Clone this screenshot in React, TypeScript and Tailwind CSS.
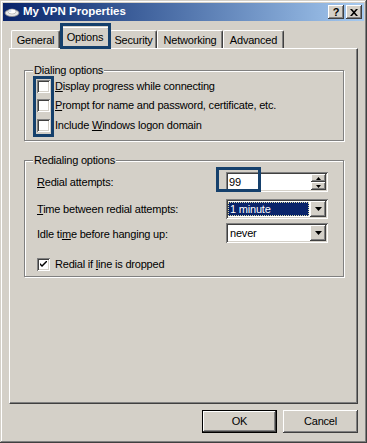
import React from "react";

const raised =
  "shadow-[inset_-1px_-1px_0_#404040,inset_1px_1px_0_#ffffff,inset_-2px_-2px_0_#808080,inset_2px_2px_0_#d4d0c8]";
const sunken =
  "shadow-[inset_1px_1px_0_#808080,inset_-1px_-1px_0_#ffffff,inset_2px_2px_0_#404040,inset_-2px_-2px_0_#d4d0c8]";
const etched =
  "border border-[#808080] shadow-[inset_1px_1px_0_#ffffff,1px_1px_0_#ffffff]";

function Check({ checked }: { checked?: boolean }) {
  return (
    <div className={`w-[13px] h-[13px] bg-white flex items-center justify-center shrink-0 ${sunken}`}>
      {checked && (
        <svg width="7" height="7" viewBox="0 0 7 7">
          <path d="M0 2 L0 4 L2 6 L7 1 L7 -1 L2 4 Z" fill="#000" />
        </svg>
      )}
    </div>
  );
}

function DownArrow() {
  return (
    <svg width="7" height="4" viewBox="0 0 7 4">
      <path d="M0 0 H7 L3.5 4 Z" fill="#000" />
    </svg>
  );
}

function Tab({ label, w, selected }: { label: string; w: string; selected?: boolean }) {
  return (
    <div
      className={`${w} ${
        selected ? "h-[22px] mb-[-1px] z-10 pb-[3px]" : "h-[18px] pt-[1px]"
      } relative bg-[#d4d0c8] border-t border-l border-white border-r border-r-[#404040] rounded-tl-[2px] rounded-tr-[2px] shadow-[inset_-1px_0_0_#808080] flex items-center justify-center`}
    >
      {label}
    </div>
  );
}

export default function App() {
  return (
    <div className="w-[367px] h-[443px] bg-[#d4d0c8] p-[3px] flex flex-col font-['Liberation_Sans',Arial,sans-serif] text-[11px] tracking-[-0.2px] text-black shadow-[inset_-1px_-1px_0_#404040,inset_1px_1px_0_#d4d0c8,inset_-2px_-2px_0_#808080,inset_2px_2px_0_#ffffff]">
      {/* Title bar */}
      <div className="h-[18px] w-[361px] bg-linear-to-r from-[#0a246a] to-[#a6caf0] flex items-center">
        <svg width="16" height="16" viewBox="0 0 16 16" className="ml-[1px]">
          <ellipse cx="8" cy="9" rx="7" ry="3.5" fill="#e8e8e8" stroke="#8a8a8a" strokeWidth="0.8" />
          <ellipse cx="8" cy="7.5" rx="4" ry="2.5" fill="#ffffff" stroke="#a0a0a0" strokeWidth="0.6" />
          <ellipse cx="6" cy="7" rx="1.5" ry="0.8" fill="#c8d8f0" />
        </svg>
        <span className="ml-[3px] text-white font-bold text-[11.5px] tracking-normal leading-none">My VPN Properties</span>
        <div className="ml-auto mr-[2px] flex gap-[2px]">
          <div className={`w-[16px] h-[14px] bg-[#d4d0c8] flex items-center justify-center font-bold text-[11px] leading-none ${raised}`}>
            ?
          </div>
          <div className={`w-[16px] h-[14px] bg-[#d4d0c8] flex items-center justify-center ${raised}`}>
            <svg width="8" height="7" viewBox="0 0 8 7">
              <path d="M0 0 H2 L4 2.3 L6 0 H8 L5 3.5 L8 7 H6 L4 4.7 L2 7 H0 L3 3.5 Z" fill="#000" />
            </svg>
          </div>
        </div>
      </div>

      {/* Tabs */}
      <div className="relative mt-[6px] ml-[8px] h-[21px] flex items-end">
        <Tab label="General" w="w-[49px]" />
        <Tab label="Options" w="w-[50px]" selected />
        <Tab label="Security" w="w-[47px]" />
        <Tab label="Networking" w="w-[66px]" />
        <Tab label="Advanced" w="w-[61px]" />
        <div className="absolute left-[49px] top-[-4px] w-[51px] h-[26px] border-[3px] border-[#15406c] z-20" />
      </div>

      {/* Panel */}
      <div className="ml-[6px] w-[349px] h-[356px] border border-t-white border-l-white border-r-[#404040] border-b-[#404040] shadow-[inset_-1px_-1px_0_#808080] flex flex-col pl-[14px] pt-[21px]">
        {/* Dialing options */}
        <div className={`relative w-[320px] h-[71px] ${etched} flex flex-col pl-[12px] pt-[9px]`}>
          <span className="absolute left-[8px] top-[-7px] px-[1px] bg-[#d4d0c8] leading-[13px]">Dialing options</span>
          <div className="h-[13px] flex items-center gap-[5px]">
            <Check />
            <span>
              <u>D</u>isplay progress while connecting
            </span>
          </div>
          <div className="h-[13px] mt-[6px] flex items-center gap-[5px]">
            <Check />
            <span>
              <u>P</u>rompt for name and password, certificate, etc.
            </span>
          </div>
          <div className="h-[13px] mt-[7px] flex items-center gap-[5px]">
            <Check />
            <span>
              Include <u>W</u>indows logon domain
            </span>
          </div>
          <div className="absolute left-[8px] top-[5px] w-[21px] h-[61px] border-[3px] border-[#15406c]" />
        </div>

        {/* Redialing options */}
        <div className={`relative mt-[19px] w-[320px] h-[117px] ${etched} flex flex-col pt-[11px]`}>
          <span className="absolute left-[8px] top-[-7px] px-[1px] bg-[#d4d0c8] leading-[13px]">Redialing options</span>

          <div className="h-[20px] flex items-center">
            <div className="w-[201px] pl-[12px]">
              <u>R</u>edial attempts:
            </div>
            <div className={`relative w-[102px] h-[20px] bg-white flex items-center p-[2px] ${sunken}`}>
              <span className="flex-1 pl-[1px]">99</span>
              <div className="w-[15px] h-[16px] flex flex-col">
                <div className={`h-[8px] bg-[#d4d0c8] flex items-center justify-center ${raised}`}>
                  <svg width="5" height="3" viewBox="0 0 5 3">
                    <path d="M0 3 H5 L2.5 0 Z" fill="#000" />
                  </svg>
                </div>
                <div className={`h-[8px] bg-[#d4d0c8] flex items-center justify-center ${raised}`}>
                  <svg width="5" height="3" viewBox="0 0 5 3">
                    <path d="M0 0 H5 L2.5 3 Z" fill="#000" />
                  </svg>
                </div>
              </div>
              <div className="absolute left-[-10px] top-[-5px] w-[45px] h-[25px] border-[3px] border-[#15406c]" />
            </div>
          </div>

          <div className="h-[20px] mt-[7px] flex items-center">
            <div className="w-[201px] pl-[12px]">
              <u>T</u>ime between redial attempts:
            </div>
            <div className={`w-[102px] h-[20px] bg-white flex items-stretch p-[2px] ${sunken}`}>
              <div className="flex-1 my-[1px] mr-[1px] bg-[#0a246a] text-white border border-dotted border-[#d8d8a8] flex items-center pl-[1px]">
                1 minute
              </div>
              <div className={`w-[16px] bg-[#d4d0c8] flex items-center justify-center ${raised}`}>
                <DownArrow />
              </div>
            </div>
          </div>

          <div className="h-[20px] mt-[4px] flex items-center">
            <div className="w-[201px] pl-[12px] pt-[3px]">
              Idle ti<u>m</u>e before hanging up:
            </div>
            <div className={`w-[102px] h-[20px] bg-white flex items-stretch p-[2px] ${sunken}`}>
              <div className="flex-1 flex items-center pl-[2px]">never</div>
              <div className={`w-[16px] bg-[#d4d0c8] flex items-center justify-center ${raised}`}>
                <DownArrow />
              </div>
            </div>
          </div>

          <div className="h-[13px] mt-[15px] pl-[12px] flex items-center gap-[5px]">
            <Check checked />
            <span>
              Redial if <u>l</u>ine is dropped
            </span>
          </div>
        </div>
      </div>

      {/* Buttons */}
      <div className="ml-[6px] w-[349px] mt-[6px] flex justify-end gap-[6px]">
        <div className="w-[75px] h-[23px] border border-black">
          <div className={`w-full h-full bg-[#d4d0c8] flex items-center justify-center ${raised}`}>OK</div>
        </div>
        <div className={`w-[75px] h-[23px] bg-[#d4d0c8] flex items-center justify-center ${raised}`}>Cancel</div>
      </div>
    </div>
  );
}
